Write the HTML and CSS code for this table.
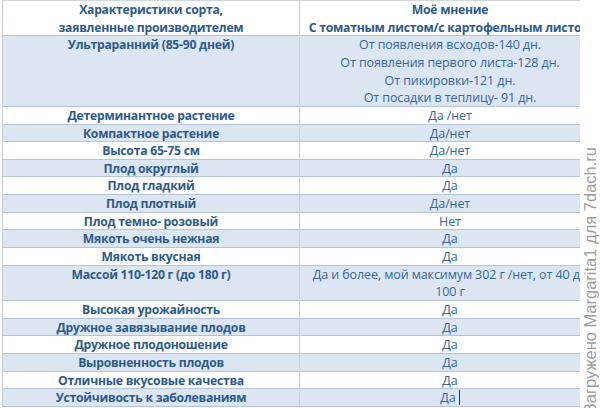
FILE: index.html
```html
<!DOCTYPE html>
<html lang="ru">
<head>
<meta charset="utf-8">
<link rel="stylesheet" href="styles.css">
</head>
<body>
<div class="sheet">
  <div class="table">
    <div class="row head">
      <div class="cell l">Характеристики сорта,<br>заявленные производителем</div>
      <div class="cell r b">Моё мнение<br>С томатным листом/с картофельным листом</div>
    </div>
    <div class="row blue u4">
      <div class="cell l">Ультраранний (85-90 дней)</div>
      <div class="cell r">От появления всходов-140 дн.<br>От появления первого листа-128 дн.<br>От пикировки-121 дн.<br>От посадки в теплицу- 91 дн.</div>
    </div>
    <div class="row"><div class="cell l">Детерминантное растение</div><div class="cell r">Да /нет</div></div>
    <div class="row blue"><div class="cell l">Компактное растение</div><div class="cell r">Да/нет</div></div>
    <div class="row"><div class="cell l">Высота 65-75 см</div><div class="cell r">Да/нет</div></div>
    <div class="row blue"><div class="cell l">Плод округлый</div><div class="cell r">Да</div></div>
    <div class="row"><div class="cell l">Плод гладкий</div><div class="cell r">Да</div></div>
    <div class="row blue"><div class="cell l">Плод плотный</div><div class="cell r">Да/нет</div></div>
    <div class="row"><div class="cell l">Плод темно- розовый</div><div class="cell r">Нет</div></div>
    <div class="row blue"><div class="cell l">Мякоть очень нежная</div><div class="cell r">Да</div></div>
    <div class="row"><div class="cell l">Мякоть вкусная</div><div class="cell r">Да</div></div>
    <div class="row blue u2">
      <div class="cell l">Массой 110-120 г (до 180 г)</div>
      <div class="cell r">Да и более, мой максимум 302 г /нет, от 40 до<br>100 г</div>
    </div>
    <div class="row"><div class="cell l">Высокая урожайность</div><div class="cell r">Да</div></div>
    <div class="row blue"><div class="cell l">Дружное завязывание плодов</div><div class="cell r">Да</div></div>
    <div class="row"><div class="cell l">Дружное плодоношение</div><div class="cell r">Да</div></div>
    <div class="row blue"><div class="cell l">Выровненность плодов</div><div class="cell r">Да</div></div>
    <div class="row"><div class="cell l">Отличные вкусовые качества</div><div class="cell r">Да</div></div>
    <div class="row blue"><div class="cell l">Устойчивость к заболеваниям</div><div class="cell r">Да<span class="caret"></span></div></div>
  </div>
  <div class="margin">
    <div class="wm">Загружено Margarita1 для 7dach.ru</div>
  </div>
</div>
</body>
</html>
```
FILE: styles.css
```css
html, body {
  margin: 0;
  padding: 0;
  background: #ffffff;
}
.sheet {
  position: relative;
  width: 600px;
  height: 408px;
  overflow: hidden;
  font-family: "Open Sans", "Noto Sans", sans-serif;
}
.table {
  margin-left: 2px;
  border-left: 1px solid #c4cbd3;
  border-top: 1px solid #d2d6db;
  width: 598px;
}
.row {
  display: grid;
  grid-template-columns: 297px 300px;
  height: 17.65px;
  box-sizing: border-box;
  border-bottom: 1px solid #b3c4d8;
  background: #ffffff;
}
.row.blue { background: #dce6f2; }
.row.head { height: 35.3px; }
.row.u4 { height: 70.6px; }
.row.u2 { height: 35.3px; }
.cell {
  line-height: 17.65px;
  text-align: center;
  white-space: nowrap;
}
.cell.l {
  font-size: 12.2px;
  letter-spacing: -0.25px;
  font-weight: 700;
  color: #2c5b8a;
  border-right: 1px solid #c7ced6;
}
.cell.r {
  font-size: 12.5px;
  letter-spacing: -0.1px;
  font-weight: 400;
  color: #34679b;
}
.cell.r.b {
  font-size: 12.2px;
  letter-spacing: -0.25px;
  font-weight: 700;
  color: #2c5b8a;
}
.caret {
  display: inline-block;
  width: 1px;
  height: 15px;
  margin-left: 3px;
  vertical-align: -3px;
  background: #333;
}
.margin {
  position: absolute;
  left: 580px;
  top: 0;
  width: 20px;
  height: 408px;
  background: #ffffff;
  overflow: hidden;
}
.wm {
  position: absolute;
  left: 0;
  bottom: -5px;
  writing-mode: vertical-rl;
  transform: rotate(180deg);
  font-family: "Liberation Sans", Arial, sans-serif;
  font-size: 16.5px;
  line-height: 20px;
  color: #9c9c9c;
  white-space: nowrap;
}
```
